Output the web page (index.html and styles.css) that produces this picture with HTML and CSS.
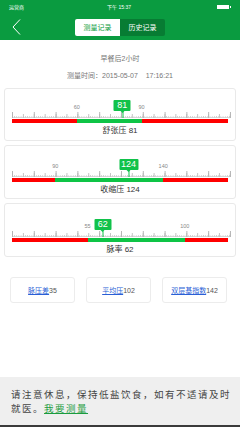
FILE: index.html
```html
<!DOCTYPE html>
<html lang="zh-CN">
<head>
<meta charset="utf-8">
<title>测量记录</title>
<link rel="stylesheet" href="styles.css">
</head>
<body>
<div class="page">
  <header class="header">
    <div class="status">
      <span class="carrier">运营商</span>
      <span class="clock">下午 15:37</span>
      <span class="battery"></span>
    </div>
    <div class="nav">
      <svg class="back" width="9" height="16" viewBox="0 0 9 16"><polyline points="8,0.5 1,8 8,15.5" fill="none" stroke="#fff" stroke-width="1"/></svg>
      <div class="tabs">
        <span class="tab active">测量记录</span>
        <span class="tab">历史记录</span>
      </div>
      <span></span>
    </div>
  </header>

  <div class="meta">
    <p class="meal">早餐后2小时</p>
    <p class="time">测量时间：2015-05-07&nbsp;&nbsp;&nbsp;&nbsp;17:16:21</p>
  </div>

  <section class="cards">
    <div class="card card-dia">
      <div class="gauge">
        <div class="scale">
          <span class="tick-label" style="left:30%">60</span>
          <span class="tick-label" style="left:60%">90</span>
          <span class="marker" style="left:51%">81</span>
        </div>
        <div class="ruler"></div>
        <div class="bar"><i class="lo" style="width:30%"></i><i class="ok" style="width:30%"></i><i class="hi"></i></div>
      </div>
      <p class="gauge-label">舒张压 81</p>
    </div>

    <div class="card card-sys">
      <div class="gauge">
        <div class="scale">
          <span class="tick-label" style="left:20%">90</span>
          <span class="tick-label" style="left:70%">140</span>
          <span class="marker" style="left:54%">124</span>
        </div>
        <div class="ruler"></div>
        <div class="bar"><i class="lo" style="width:20%"></i><i class="ok" style="width:50%"></i><i class="hi"></i></div>
      </div>
      <p class="gauge-label">收缩压 124</p>
    </div>

    <div class="card card-pulse">
      <div class="gauge">
        <div class="scale">
          <span class="tick-label" style="left:35%">55</span>
          <span class="tick-label" style="left:80%">100</span>
          <span class="marker" style="left:42%">62</span>
        </div>
        <div class="ruler"></div>
        <div class="bar"><i class="lo" style="width:35%"></i><i class="ok" style="width:45%"></i><i class="hi"></i></div>
      </div>
      <p class="gauge-label">脉率 62</p>
    </div>
  </section>

  <section class="stats">
    <div class="stat"><a href="#">脉压差</a>35</div>
    <div class="stat"><a href="#">平均压</a>102</div>
    <div class="stat"><a href="#">双层基指数</a>142</div>
  </section>

  <footer class="advice">
    <p>请注意休息，保持低盐饮食，如有不适请及时<br>就医。<a href="#">我要测量</a></p>
  </footer>
</div>
</body>
</html>
```

FILE: styles.css
```css
* { box-sizing: border-box; }

body {
  margin: 0;
  font-family: "Liberation Sans", "Noto Sans CJK SC", sans-serif;
  background: #fff;
}

p { margin: 0; }

.page {
  width: 240px;
  height: 427px;
  display: flex;
  flex-direction: column;
  overflow: hidden;
  background: #fff;
}

/* header */
.header {
  height: 40px;
  background: #0a9b40;
  color: #fff;
}

.status {
  height: 14px;
  display: grid;
  grid-template-columns: 1fr auto 1fr;
  align-items: center;
  padding: 0 11px 0 9px;
  font-size: 5px;
  line-height: 6px;
}

.battery {
  justify-self: end;
  width: 12px;
  height: 4px;
  background: #fff;
  position: relative;
}

.battery::after {
  content: "";
  position: absolute;
  right: -2px;
  top: 1px;
  width: 1px;
  height: 2px;
  background: #fff;
}

.nav {
  height: 26px;
  display: grid;
  grid-template-columns: 1fr auto 1fr;
  align-items: center;
}

.back {
  display: block;
  margin-left: 12px;
}

.tabs {
  display: flex;
  border-radius: 2px;
  overflow: hidden;
}

.tab {
  width: 45px;
  height: 17px;
  line-height: 17px;
  text-align: center;
  font-size: 7px;
  background: #077c33;
  color: #fff;
}

.tab.active {
  background: #fff;
  color: #0a9b40;
}

/* meta */
.meta {
  padding-top: 14px;
  text-align: center;
  color: #777;
  font-size: 7px;
  line-height: 10px;
}

.time {
  margin-top: 7px;
}

/* gauge cards */
.cards {
  margin-top: 7px;
  padding: 0 4px;
  display: flex;
  flex-direction: column;
  gap: 4px;
}

.card {
  border: 1px solid #e9e9e9;
  border-radius: 3px;
  height: 54px;
  padding: 11px 7px 0;
}

.card-dia { height: 53px; padding-top: 11px; }
.card-sys { padding-top: 13px; }
.card-pulse { padding-top: 15px; }

.scale {
  position: relative;
  height: 12px;
}

.tick-label {
  position: absolute;
  top: 4px;
  transform: translateX(-50%);
  font-size: 5.5px;
  line-height: 6px;
  color: #888;
}

.marker {
  position: absolute;
  top: 0;
  transform: translateX(-50%);
  min-width: 17px;
  height: 11px;
  padding: 0 2px;
  background: #10c24a;
  color: #fff;
  font-size: 9px;
  line-height: 11px;
  text-align: center;
  border-radius: 1px;
  z-index: 2;
}

.marker::before {
  content: "";
  position: absolute;
  left: 50%;
  top: 11px;
  margin-left: -2px;
  border-left: 2px solid transparent;
  border-right: 2px solid transparent;
  border-top: 2px solid #10c24a;
}

.marker::after {
  content: "";
  position: absolute;
  left: 50%;
  top: 11px;
  width: 1px;
  height: 7px;
  background: #10c24a;
}

.ruler {
  height: 6px;
  width: 219px;
  background:
    linear-gradient(to right, #b5b5b5 1px, transparent 1px) 0 100% / 21.8px 6px repeat-x,
    linear-gradient(to right, #c4c4c4 1px, transparent 1px) 0 100% / 10.9px 4px repeat-x,
    linear-gradient(to right, #cfcfcf 1px, transparent 1px) 0 100% / 2.18px 2px repeat-x,
    linear-gradient(#d8d8d8, #d8d8d8) 0 100% / 100% 1px no-repeat;
}

.bar {
  margin-top: 1px;
  height: 4px;
  display: flex;
}

.bar i { display: block; height: 100%; }
.bar .lo { background: #ff0000; }
.bar .ok { background: #0ec446; }
.bar .hi { background: #ff0000; flex: 1; }

.gauge-label {
  margin-top: 3px;
  text-align: center;
  font-size: 8px;
  line-height: 10px;
  color: #333;
}

/* stats */
.stats {
  margin-top: 20px;
  padding: 0 10px;
  display: grid;
  grid-template-columns: repeat(3, 65px);
  gap: 11px;
}

.stat {
  height: 26px;
  border: 1px solid #ececec;
  border-radius: 3px;
  display: flex;
  align-items: center;
  justify-content: center;
  font-size: 7px;
  color: #555;
}

.stat a {
  color: #2a5fd6;
  text-decoration: underline;
}

/* advice */
.advice {
  margin-top: auto;
  background: #efefef;
  border-bottom: 2px solid #3a3a3a;
  padding: 11px 4px 9px 11px;
  font-size: 9.5px;
  line-height: 14px;
  letter-spacing: 1.5px;
  white-space: nowrap;
  color: #444;
}

.advice a {
  color: #1a9c3e;
  text-decoration: underline;
}
```
